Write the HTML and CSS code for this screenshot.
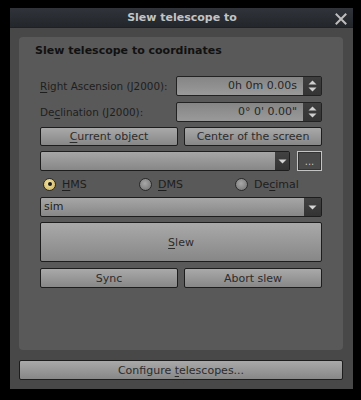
FILE: index.html
```html
<!DOCTYPE html>
<html>
<head>
<meta charset="utf-8">
<link rel="stylesheet" href="styles.css">
</head>
<body>
<div class="window">
  <div class="titlebar">
    <span class="title">Slew telescope to</span>
    <svg class="close" width="12" height="12" viewBox="0 0 12 12"><path d="M1.5 1.5 L10.5 10.5 M10.5 1.5 L1.5 10.5" stroke="#bdbdbd" stroke-width="2" stroke-linecap="square"/></svg>
  </div>
  <div class="body">
    <div class="group">
      <div class="group-title">Slew telescope to coordinates</div>
      <div class="rows">
        <div class="row field-row r-ra">
          <span class="label"><u>R</u>ight Ascension (J2000):</span>
          <div class="spin">
            <span class="spin-text">0h 0m 0.00s</span>
            <span class="spin-arrows">
              <svg width="9" height="5" viewBox="0 0 9 5"><path d="M0.5 4.5 L4.5 0.5 L8.5 4.5 Z" fill="#cfcfcf"/></svg>
              <svg width="9" height="5" viewBox="0 0 9 5"><path d="M0.5 0.5 L4.5 4.5 L8.5 0.5 Z" fill="#cfcfcf"/></svg>
            </span>
          </div>
        </div>
        <div class="row field-row r-dec">
          <span class="label">De<u>c</u>lination (J2000):</span>
          <div class="spin">
            <span class="spin-text">0° 0' 0.00"</span>
            <span class="spin-arrows">
              <svg width="9" height="5" viewBox="0 0 9 5"><path d="M0.5 4.5 L4.5 0.5 L8.5 4.5 Z" fill="#cfcfcf"/></svg>
              <svg width="9" height="5" viewBox="0 0 9 5"><path d="M0.5 0.5 L4.5 4.5 L8.5 0.5 Z" fill="#cfcfcf"/></svg>
            </span>
          </div>
        </div>
        <div class="row two r-btns">
          <div class="btn"><span><u>C</u>urrent object</span></div>
          <div class="btn"><span>Center of the screen</span></div>
        </div>
        <div class="row r-combo">
          <div class="combo grow">
            <span class="combo-text"></span>
            <span class="combo-arrow"><svg width="9" height="5" viewBox="0 0 9 5"><path d="M0.5 0.5 L4.5 4.5 L8.5 0.5 Z" fill="#d4d4d4"/></svg></span>
          </div>
          <div class="dots">...</div>
        </div>
        <div class="row radios">
          <span class="radio-item"><span class="radio on"></span><span><u>H</u>MS</span></span>
          <span class="radio-item"><span class="radio"></span><span><u>D</u>MS</span></span>
          <span class="radio-item"><span class="radio"></span><span>De<u>c</u>imal</span></span>
        </div>
        <div class="row r-sim">
          <div class="combo grow">
            <span class="combo-text">sim</span>
            <span class="combo-arrow wide"><svg width="9" height="5" viewBox="0 0 9 5"><path d="M0.5 0.5 L4.5 4.5 L8.5 0.5 Z" fill="#d4d4d4"/></svg></span>
          </div>
        </div>
        <div class="row r-slew">
          <div class="btn big"><span><u>S</u>lew</span></div>
        </div>
        <div class="row two r-sync">
          <div class="btn"><span>Sync</span></div>
          <div class="btn"><span>Abort slew</span></div>
        </div>
      </div>
    </div>
    <div class="btn configure"><span>Configure <u>t</u>elescopes...</span></div>
  </div>
</div>
</body>
</html>
```

FILE: styles.css
```css
html, body {
  margin: 0;
  padding: 0;
  background: #000;
}
body {
  padding: 8px 0 0 10px;
  font-family: "DejaVu Sans", sans-serif;
  font-size: 11px;
  color: #1c1c1c;
}
u {
  text-decoration: underline;
  text-underline-offset: 2px;
}
.window {
  width: 343px;
  height: 381px;
  background: #484848;
  display: flex;
  flex-direction: column;
}
.titlebar {
  height: 21px;
  background: linear-gradient(#30343a, #23262b);
  display: flex;
  align-items: center;
  justify-content: center;
  position: relative;
  border-bottom: 1px solid #1e2023;
  box-sizing: border-box;
}
.title {
  font-weight: bold;
  font-size: 11px;
  color: #c2c4c6;
  padding-left: 1px;
}
.close {
  position: absolute;
  right: 6px;
  top: 5px;
}
.body {
  padding: 9px 10px 9px 9px;
  display: flex;
  flex-direction: column;
  gap: 10px;
}
.group {
  height: 313px;
  background: #595959;
  border-radius: 4px;
  padding: 7px 21px 0 21px;
  box-sizing: border-box;
}
.group-title {
  font-weight: bold;
  font-size: 11px;
  color: #111;
  margin-left: -5px;
  line-height: 14px;
}
.rows {
  margin-top: 18px;
  display: flex;
  flex-direction: column;
  gap: 5px;
}
.row {
  display: flex;
  height: 20px;
}
.field-row {
  justify-content: space-between;
  align-items: center;
}
.r-dec { height: 21px; }
.r-btns { height: 19px; }
.r-slew { height: 40px; }
.r-sync { margin-top: 1px; }
.label {
  font-size: 10.4px;
  color: #1e1e1e;
}
.spin {
  width: 146px;
  height: 20px;
  box-sizing: border-box;
  border: 1px solid #222;
  border-radius: 2px;
  display: flex;
  background: linear-gradient(#858585, #9a9a9a);
}
.spin-text {
  flex: 1;
  text-align: right;
  padding-right: 6px;
  line-height: 18px;
  color: #262626;
}
.spin-arrows {
  width: 18px;
  background: linear-gradient(#3e3e3e, #343434);
  display: flex;
  flex-direction: column;
  align-items: center;
  justify-content: center;
  gap: 2px;
}
.spin-arrows svg { display: block; }
.two {
  gap: 6px;
}
.two .btn { flex: 1; }
.btn {
  box-sizing: border-box;
  border: 1px solid #1d1d1d;
  border-radius: 2px;
  background: linear-gradient(#a9a9a9, #878787);
  color: #2c2c2c;
  display: flex;
  align-items: center;
  justify-content: center;
  font-size: 11px;
}
.big { flex: 1; }
.combo {
  box-sizing: border-box;
  border: 1px solid #1d1d1d;
  border-radius: 2px;
  background: linear-gradient(#a6a6a6, #878787);
  display: flex;
  color: #222;
}
.grow { flex: 1; }
.combo-text {
  flex: 1;
  padding-left: 3px;
  line-height: 18px;
  font-size: 11px;
}
.combo-arrow {
  width: 14px;
  background: linear-gradient(#424242, #333);
  display: flex;
  align-items: center;
  justify-content: center;
}
.combo-arrow.wide { width: 17px; }
.combo-arrow svg { display: block; }
.r-combo { gap: 7px; }
.dots {
  width: 25px;
  box-sizing: border-box;
  border: 1px solid #c4c4c4;
  background: #4a4a4a;
  box-shadow: inset 0 0 0 1px #333;
  color: #c8c8c8;
  display: flex;
  align-items: center;
  justify-content: center;
  font-size: 10px;
}
.radios {
  height: 16px;
  display: grid;
  grid-template-columns: 96px 96px 1fr;
  padding-left: 3px;
  align-items: center;
}
.radio-item {
  display: flex;
  align-items: center;
  gap: 6px;
  color: #1e1e1e;
}
.radio {
  width: 13px;
  height: 13px;
  box-sizing: border-box;
  border-radius: 50%;
  border: 1px solid #2a2a2a;
  background: radial-gradient(circle at 45% 40%, #a8a8a8, #6e6e6e);
  position: relative;
}
.radio.on {
  background: radial-gradient(circle at 45% 40%, #f4e6a6, #c9ae5a);
}
.radio.on::after {
  content: "";
  position: absolute;
  left: 3.5px;
  top: 3.5px;
  width: 4px;
  height: 4px;
  border-radius: 50%;
  background: #1a1a1a;
}
.configure {
  height: 20px;
}
```
